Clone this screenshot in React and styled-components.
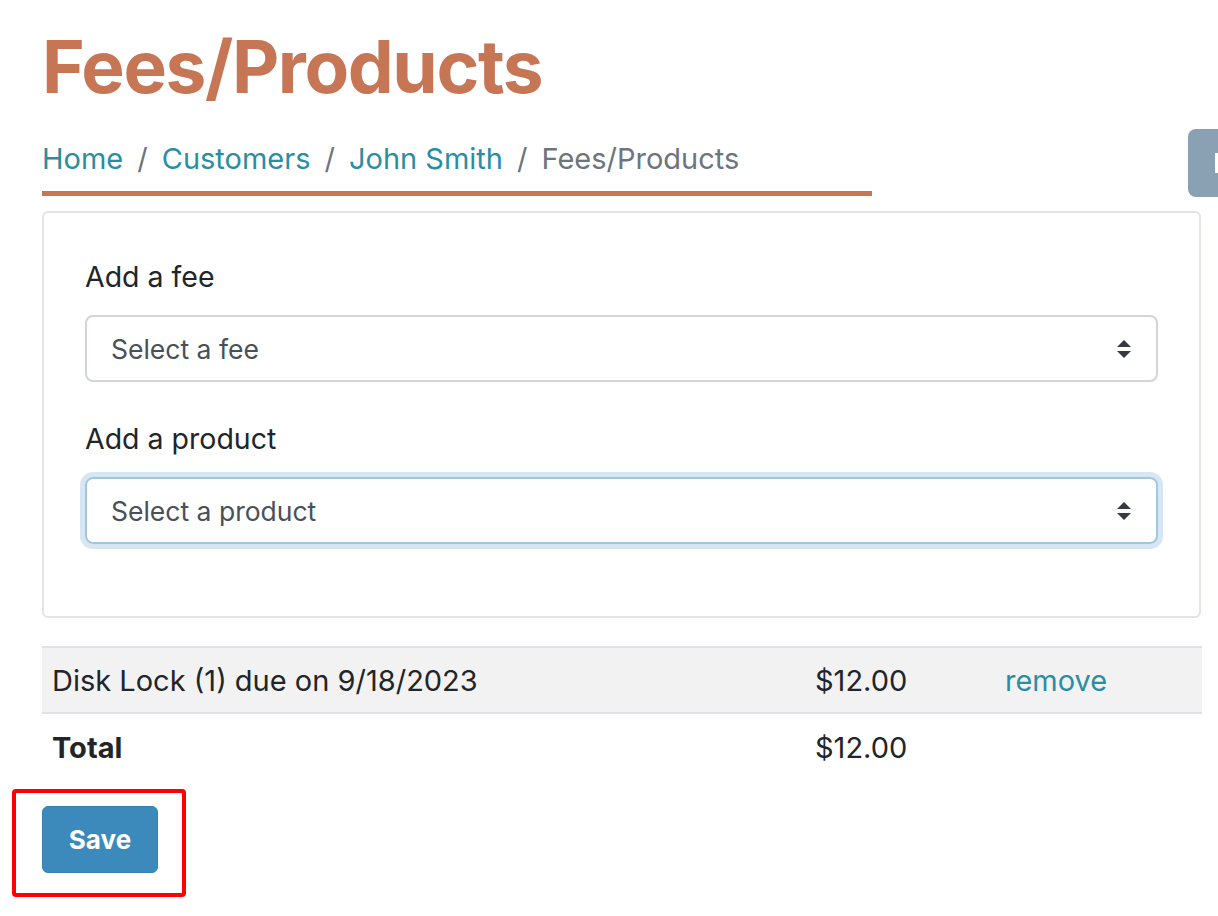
import React from "react";
import styled, { createGlobalStyle } from "styled-components";

const Global = createGlobalStyle`
  html, body { margin: 0; padding: 0; background: #fff; }
  body { font-family: Inter, "Noto Sans", "Liberation Sans", sans-serif; color: #212529; }
  * { box-sizing: border-box; }
`;

const Page = styled.div`
  padding: 22px 17px 40px 42px;
  width: 1218px;
  position: relative;
`;

const Title = styled.h1`
  margin: 0;
  font-size: 73px;
  font-weight: 700;
  line-height: 90px;
  color: #c77655;
  letter-spacing: -1.4px;
`;

const Crumbs = styled.nav`
  margin-top: 27px;
  width: 830px;
  border-bottom: 5px solid #c77655;
  padding-bottom: 12px;
  display: flex;
  align-items: center;
  font-size: 29px;
  line-height: 40px;
`;

const Crumb = styled.span`
  color: ${(p) => (p.$active ? "#6c757d" : "#2a8ea2")};
`;

const Sep = styled.span`
  color: #6c757d;
  padding: 0 14px;
`;

const Card = styled.div`
  margin-top: 15px;
  width: 1159px;
  border: 2px solid #e1e4e8;
  border-radius: 6px;
  padding: 44px 41px 72px 41px;
  display: flex;
  flex-direction: column;
`;

const Label = styled.label`
  font-size: 28.5px;
  line-height: 40px;
  color: #212529;
  margin-bottom: 18px;
`;

const SelectBox = styled.div`
  height: 67px;
  border: 2px solid ${(p) => (p.$focus ? "#9fc6e2" : "#d2d6db")};
  border-radius: 8px;
  box-shadow: ${(p) => (p.$focus ? "0 0 0 5px #d6e6f2" : "none")};
  display: flex;
  align-items: center;
  justify-content: space-between;
  padding: 0 24px 0 24px;
  font-size: 26.5px;
  color: #495057;
  margin-bottom: ${(p) => p.$mb || 0}px;
`;

const Arrows = () => (
  <svg width="16" height="22" viewBox="0 0 16 22">
    <path d="M8 2 L15 9 L1 9 Z" fill="#343a40" />
    <path d="M8 20 L15 13 L1 13 Z" fill="#343a40" />
  </svg>
);

const Table = styled.div`
  margin-top: 28px;
  width: 1160px;
`;

const Row = styled.div`
  display: grid;
  grid-template-columns: 763px 190px 207px;
  height: ${(p) => p.$h}px;
  align-items: center;
  background: ${(p) => (p.$shade ? "#f2f2f2" : "transparent")};
  border-top: ${(p) => (p.$shade ? "2px solid #dee2e6" : "none")};
  border-bottom: ${(p) => (p.$shade ? "2px solid #dee2e6" : "none")};
  font-size: 29px;
`;

const Cell = styled.div`
  padding-left: 10px;
  font-weight: ${(p) => (p.$bold ? 700 : 400)};
  color: ${(p) => (p.$link ? "#2a8ea2" : "#212529")};
`;

const SaveWrap = styled.div`
  position: relative;
  margin-top: 26px;
  width: 116px;
`;

const Highlight = styled.div`
  position: absolute;
  left: -30px;
  top: -17px;
  width: 174px;
  height: 108px;
  border: 4px solid #ff0000;
  border-radius: 4px;
  pointer-events: none;
`;

const SaveButton = styled.button`
  width: 116px;
  height: 67px;
  background: #3c8abb;
  border: 1px solid #3582b3;
  border-radius: 6px;
  color: #fff;
  font-family: inherit;
  font-size: 26px;
  font-weight: 700;
`;

const SideTab = styled.div`
  position: absolute;
  right: 0;
  top: 129px;
  width: 30px;
  height: 68px;
  background: #8aa1b3;
  border-radius: 8px 0 0 8px;
  display: flex;
  align-items: center;
  justify-content: flex-end;
`;

const TabMark = styled.span`
  width: 3px;
  height: 20px;
  background: #fff;
`;

export default function App() {
  return (
    <>
      <Global />
      <Page>
        <Title>Fees/Products</Title>
        <Crumbs>
          <Crumb>Home</Crumb>
          <Sep>/</Sep>
          <Crumb>Customers</Crumb>
          <Sep>/</Sep>
          <Crumb>John Smith</Crumb>
          <Sep>/</Sep>
          <Crumb $active>Fees/Products</Crumb>
        </Crumbs>
        <SideTab>
          <TabMark />
        </SideTab>
        <Card>
          <Label>Add a fee</Label>
          <SelectBox $mb={37}>
            <span>Select a fee</span>
            <Arrows />
          </SelectBox>
          <Label>Add a product</Label>
          <SelectBox $focus>
            <span>Select a product</span>
            <Arrows />
          </SelectBox>
        </Card>
        <Table>
          <Row $shade $h={68}>
            <Cell>Disk Lock (1) due on 9/18/2023</Cell>
            <Cell>$12.00</Cell>
            <Cell $link>remove</Cell>
          </Row>
          <Row $h={66}>
            <Cell $bold>Total</Cell>
            <Cell>$12.00</Cell>
            <Cell />
          </Row>
        </Table>
        <SaveWrap>
          <Highlight />
          <SaveButton>Save</SaveButton>
        </SaveWrap>
      </Page>
    </>
  );
}
